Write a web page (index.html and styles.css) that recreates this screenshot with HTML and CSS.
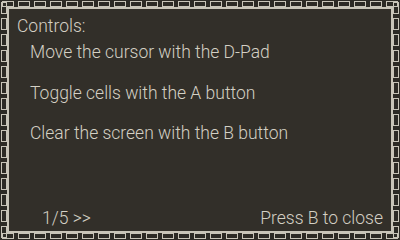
FILE: index.html
```html
<!DOCTYPE html>
<html lang="en">
<head>
  <meta charset="UTF-8">
  <meta name="viewport" content="width=device-width, initial-scale=1.0">
  <title>Controls</title>
  <link rel="stylesheet" href="styles.css">
</head>
<body>
  <div class="screen">
    <svg class="frame" width="400" height="240" viewBox="0 0 400 240">
      <defs>
        <pattern id="links-h" x="2" y="1" width="16" height="240" patternUnits="userSpaceOnUse">
          <rect x="0.5" y="0.5" width="11" height="5" fill="none" stroke="#c8c4b8" stroke-width="1"/>
        </pattern>
        <pattern id="links-v" x="1" y="2" width="240" height="16" patternUnits="userSpaceOnUse">
          <rect x="0.5" y="0.5" width="5" height="11" fill="none" stroke="#c8c4b8" stroke-width="1"/>
        </pattern>
        <pattern id="links-hb" x="2" y="233" width="16" height="240" patternUnits="userSpaceOnUse">
          <rect x="0.5" y="0.5" width="11" height="5" fill="none" stroke="#c8c4b8" stroke-width="1"/>
        </pattern>
        <pattern id="links-vr" x="393" y="2" width="240" height="16" patternUnits="userSpaceOnUse">
          <rect x="0.5" y="0.5" width="5" height="11" fill="none" stroke="#c8c4b8" stroke-width="1"/>
        </pattern>
      </defs>
      <rect x="0" y="0" width="400" height="8" fill="url(#links-h)"/>
      <rect x="0" y="233" width="400" height="7" fill="url(#links-hb)"/>
      <rect x="0" y="0" width="8" height="240" fill="url(#links-v)"/>
      <rect x="393" y="0" width="7" height="240" fill="url(#links-vr)"/>
      <rect x="8" y="8" width="384" height="224" fill="#322f29" stroke="#c8c4b8" stroke-width="2"/>
    </svg>

    <div class="panel">
      <div class="title">Controls:</div>
      <ul class="controls">
        <li>Move the cursor with the D-Pad</li>
        <li>Toggle cells with the A button</li>
        <li>Clear the screen with the B button</li>
      </ul>
      <div class="footer">
        <span class="page">1/5 &gt;&gt;</span>
        <span class="hint">Press B to close</span>
      </div>
    </div>
  </div>
</body>
</html>
```
FILE: styles.css
```css
* {
  margin: 0;
  padding: 0;
  box-sizing: border-box;
}

body {
  background-color: #2c2a25;
  color: #d4d0c4;
  font-family: 'Roboto', 'Liberation Sans', sans-serif;
  font-weight: 300;
  font-size: 17.5px;
  line-height: 20px;
}

.screen {
  width: 400px;
  height: 240px;
  display: grid;
}

.frame,
.panel {
  grid-area: 1 / 1;
}

.frame {
  display: block;
}

.panel {
  display: flex;
  flex-direction: column;
  padding: 16px 17px 12px 17px;
}

.title {
  height: 20px;
}

.controls {
  list-style: none;
  display: flex;
  flex-direction: column;
  gap: 20.5px;
  margin-top: 6px;
  padding-left: 13px;
}

.controls li {
  height: 20px;
  white-space: nowrap;
}

.footer {
  margin-top: auto;
  display: flex;
  justify-content: space-between;
  padding-left: 25px;
}
```
